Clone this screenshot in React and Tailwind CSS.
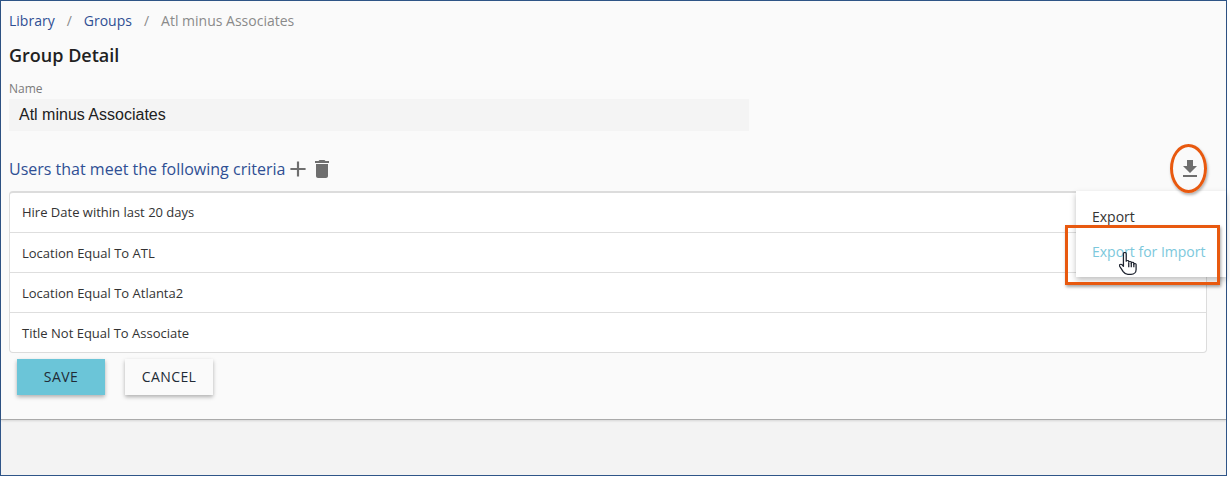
const criteria = [
    'Hire Date within last 20 days',
    'Location Equal To ATL',
    'Location Equal To Atlanta2',
    'Title Not Equal To Associate',
];

const PlusIcon = () => (
    <svg width="26" height="26" viewBox="0 0 24 24" fill="#6e6e6e">
        <path d="M19 13h-6v6h-2v-6H5v-2h6V5h2v6h6v2z" />
    </svg>
);

const DownloadIcon = () => (
    <svg width="24" height="24" viewBox="0 0 24 24" fill="#6e6e6e">
        <path d="M19 9h-4V3H9v6H5l7 7 7-7zM5 18v2h14v-2H5z" />
    </svg>
);

const TrashIcon = () => (
    <svg width="24" height="24" viewBox="0 0 24 24" fill="#6e6e6e">
        <path d="M6 19c0 1.1.9 2 2 2h8c1.1 0 2-.9 2-2V7H6v12zM19 4h-3.500l-1-1h-5l-1 1H5v2h14V4z" />
    </svg>
);

const HandCursor = () => (
    <svg width="19" height="24" viewBox="2 1 15 22" preserveAspectRatio="none" fill="white" stroke="#1f2430" strokeWidth="1" strokeLinejoin="round">
        <path d="M5.500 2.500c0-1.400 2.200-1.400 2.200 0v7c0-1 2-1 2 0v1c0-1 2-1 2 0v.7c0-1 2-1 2 0v1c0-.9 1.800-.9 1.800.3v4.500c0 2.500-1.500 4.500-4 4.500H9c-1.800 0-2.800-1-3.700-2.500L2.500 14c-.7-1.300 1-2.400 2-1.200l1 1.400V2.500z" />
        <path d="M9.700 11v4M11.700 11v4M13.700 12v3" fill="none" />
    </svg>
);

const App = () => {
    return (
        <div className="relative h-[479px] w-[1230px] overflow-hidden bg-white font-['Open_Sans',sans-serif]">
            <div className="h-[476px] w-[1227px] border border-[#2f5588] bg-[#f3f3f3]">
                <div className="h-[419px] border-b border-[#aaaaaa] bg-[#fafafa] pl-2 pr-[19px] shadow-[0_1px_2px_rgba(0,0,0,0.12)]">
                    <div className="flex h-[39px] items-center text-sm text-[#8a8a8a]">
                        <span className="text-[#2f4f94]">Library</span>
                        <span className="mx-[12px]">/</span>
                        <span className="text-[#2f4f94]">Groups</span>
                        <span className="mx-[12px]">/</span>
                        <span>Atl minus Associates</span>
                    </div>

                    <h1 className="flex h-[31px] items-center text-[18px] font-semibold text-[#212121]">Group Detail</h1>

                    <label className="mt-[8px] block h-[20px] text-xs leading-[20px] text-[#7b7b7b]">Name</label>
                    <div className="flex h-[32px] w-[740px] items-center bg-[#f4f4f4] px-[10px] font-['Liberation_Sans',sans-serif] text-base text-[#212121]">
                        Atl minus Associates
                    </div>

                    <div className="mt-[19px] flex h-[37px] items-center">
                        <span className="text-base text-[#2f4f94]">Users that meet the following criteria</span>
                        <span className="flex"><PlusIcon /></span>
                        <span className="-ml-[1px] flex"><TrashIcon /></span>
                        <span className="ml-auto mr-[5px] flex"><DownloadIcon /></span>
                    </div>

                    <ul className="mt-[4px] rounded border border-t-2 border-[#dcdcdc] bg-white">
                        {criteria.map((item, i) => (
                            <li key={item} className={`flex items-center px-3 text-[13px] text-[#333333] ${i > 0 ? 'h-[40px] border-t border-[#dedede] pt-[2px]' : 'h-[39px]'}`}>
                                {item}
                            </li>
                        ))}
                    </ul>

                    <div className="ml-[8px] mt-[6px] flex gap-5">
                        <button className="h-[36px] w-[88px] bg-[#6bc5d8] text-sm font-medium tracking-[0.03em] text-[#212b36] shadow-[0_2px_4px_rgba(0,0,0,0.3)]">SAVE</button>
                        <button className="h-[36px] w-[88px] bg-[#fafafa] text-sm font-medium tracking-[0.03em] text-[#212b36] shadow-[0_2px_4px_rgba(0,0,0,0.3)]">CANCEL</button>
                    </div>
                </div>
            </div>

            {/* export menu */}
            <div className="absolute left-[1076px] top-[191px] h-[86px] w-[150px] bg-white pt-[8px] text-sm shadow-[0_3px_6px_rgba(0,0,0,0.25)]">
                <div className="flex h-[35px] items-center pl-4 text-[#333333]">Export</div>
                <div className="flex h-[35px] items-center pl-4 text-[#7cc8dc]">Export for Import</div>
            </div>

            {/* screenshot annotations */}
            <div className="absolute left-[1065px] top-[225px] h-[60px] w-[155px] border-[3px] border-[#e8590f] shadow-[1px_2px_3px_rgba(0,0,0,0.35)]" />
            <div className="absolute left-[1170px] top-[144px] h-[49px] w-[37px] rounded-[50%] border-[3px] border-[#e8590f] shadow-[1px_2px_3px_rgba(0,0,0,0.3)]" />
            <div className="absolute left-[1119px] top-[252px] flex"><HandCursor /></div>
        </div>
    );
};

export default App;
